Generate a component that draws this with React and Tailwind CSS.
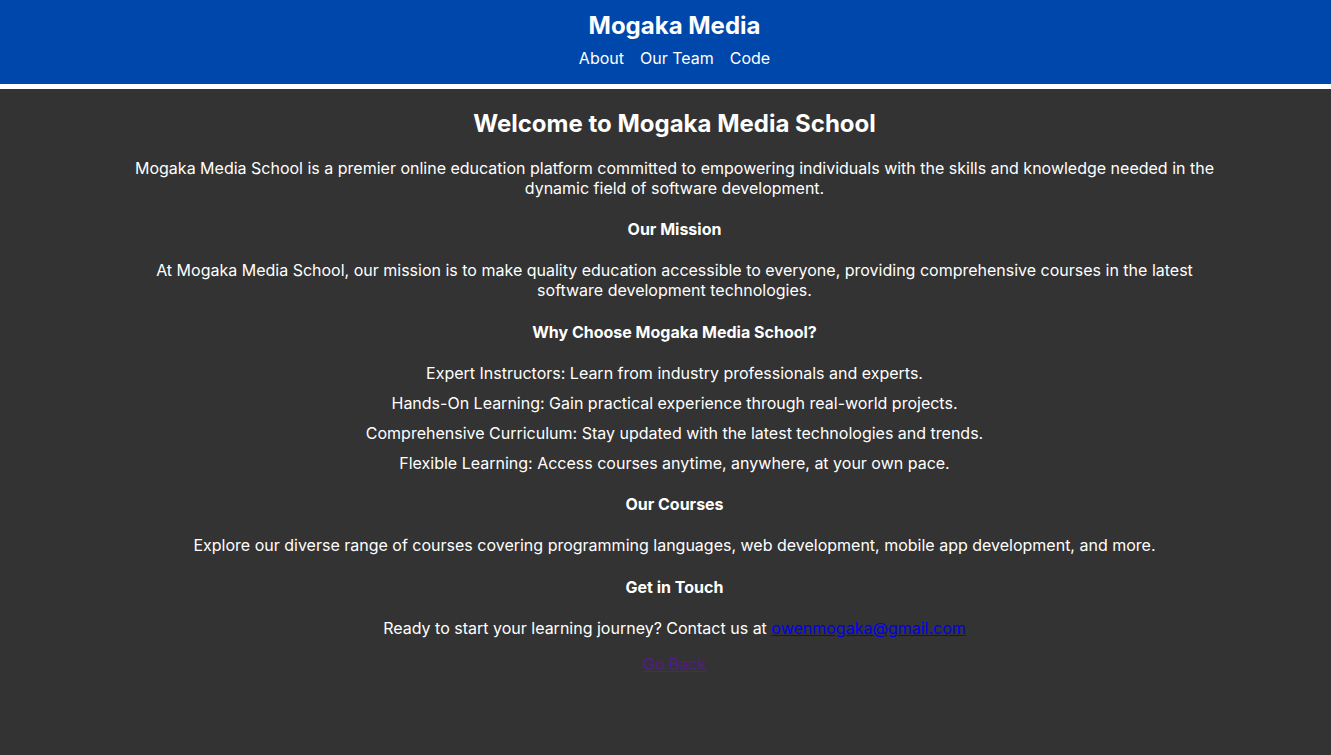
export default function App() {
  const reasons = [
    'Expert Instructors: Learn from industry professionals and experts.',
    'Hands-On Learning: Gain practical experience through real-world projects.',
    'Comprehensive Curriculum: Stay updated with the latest technologies and trends.',
    'Flexible Learning: Access courses anytime, anywhere, at your own pace.',
  ];

  return (
    <div className="min-h-[755px] bg-[#333333] font-['Inter',sans-serif] text-white">
      <header className="bg-[#0047ab] pt-[10px] pb-[14px] pl-[18px] text-center border-b-[5px] border-white">
        <h1 className="text-2xl leading-8 font-bold">Mogaka Media</h1>
        <nav className="mt-[4px] flex justify-center gap-4 text-base leading-6">
          <a href="#">About</a>
          <a href="#">Our Team</a>
          <a href="#">Code</a>
        </nav>
      </header>

      <div className="pl-[18px]">
        <main className="max-w-[1100px] mx-auto pt-[19px] text-center text-base leading-5">
          <h2 className="text-2xl leading-8 font-bold">Welcome to Mogaka Media School</h2>
          <p className="mt-[18px]">
            Mogaka Media School is a premier online education platform committed to empowering individuals with the
            skills and knowledge needed in the dynamic field of software development.
          </p>

          <h3 className="mt-[21px] font-bold">Our Mission</h3>
          <p className="mt-[21px]">
            At Mogaka Media School, our mission is to make quality education accessible to everyone, providing
            comprehensive courses in the latest software development technologies.
          </p>

          <h3 className="mt-[22px] font-bold">Why Choose Mogaka Media School?</h3>
          <ul className="mt-[21px] flex flex-col gap-[10px]">
            {reasons.map((r) => (
              <li key={r}>{r}</li>
            ))}
          </ul>

          <h3 className="mt-[21px] font-bold">Our Courses</h3>
          <p className="mt-[21px]">
            Explore our diverse range of courses covering programming languages, web development, mobile app
            development, and more.
          </p>

          <h3 className="mt-[22px] font-bold">Get in Touch</h3>
          <p className="mt-[21px]">
            Ready to start your learning journey? Contact us at{' '}
            <a href="#" className="text-[#0000ee] underline">owenmogaka@gmail.com</a>
          </p>

          <p className="mt-[16px]">
            <a href="#" className="text-[#551a8b] underline">Go Back</a>
          </p>
        </main>
      </div>
    </div>
  );
}
